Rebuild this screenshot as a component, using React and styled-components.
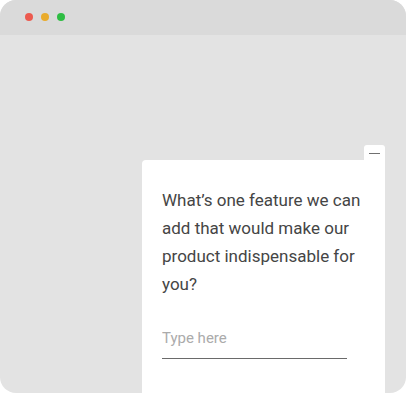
import React from "react";
import styled, { createGlobalStyle } from "styled-components";

const Global = createGlobalStyle`
  html, body { margin: 0; padding: 0; background: #ffffff; }
  body { font-family: Roboto, "Liberation Sans", sans-serif; }
`;

const Window = styled.div`
  width: 406px;
  height: 393px;
  border-radius: 16px;
  overflow: hidden;
  background: #e3e3e3;
  display: flex;
  flex-direction: column;
`;

const TitleBar = styled.div`
  height: 35px;
  flex: none;
  background: #dadada;
  display: flex;
  align-items: center;
  gap: 8px;
  padding-left: 25px;
  padding-bottom: 1px;
  box-sizing: border-box;
`;

const Dot = styled.span`
  width: 8px;
  height: 8px;
  border-radius: 50%;
  background: ${(p) => p.$color};
`;

const Body = styled.div`
  flex: 1;
  min-height: 0;
  display: flex;
  justify-content: flex-end;
  align-items: flex-start;
  padding: 110px 21px 0 0;
`;

const Widget = styled.div`
  display: flex;
  flex-direction: column;
  align-items: flex-end;
  width: 243px;
`;

const MinTab = styled.button`
  width: 21px;
  height: 15px;
  border: none;
  padding: 0;
  background: #ffffff;
  border-radius: 3px 3px 0 0;
  display: flex;
  align-items: center;
  justify-content: center;
  padding-top: 1px;
  cursor: pointer;
`;

const MinLine = styled.span`
  width: 11px;
  height: 1px;
  background: #707070;
`;

const Card = styled.div`
  width: 100%;
  height: 240px;
  background: #ffffff;
  border-radius: 4px 0 0 0;
  box-sizing: border-box;
  padding: 26px 20px 0 20px;
`;

const Question = styled.p`
  margin: 0;
  font-size: 17px;
  line-height: 28px;
  color: #454545;
  font-weight: 400;
`;

const Input = styled.input`
  display: block;
  margin-top: 31px;
  width: 185px;
  border: none;
  border-bottom: 1px solid #6a6a6a;
  outline: none;
  padding: 0 0 11px 0;
  font-family: Roboto, "Liberation Sans", sans-serif;
  font-size: 15px;
  line-height: 18px;
  color: #444;
  background: transparent;
  &::placeholder { color: #ababab; }
`;

export default function App() {
  return (
    <>
      <Global />
      <Window>
        <TitleBar>
          <Dot $color="#ec5a4f" />
          <Dot $color="#e9ab2c" />
          <Dot $color="#2ebd43" />
        </TitleBar>
        <Body>
          <Widget>
            <MinTab aria-label="Minimize">
              <MinLine />
            </MinTab>
            <Card>
              <Question>
                What’s one feature we can add that would make our product
                indispensable for you?
              </Question>
              <Input placeholder="Type here" />
            </Card>
          </Widget>
        </Body>
      </Window>
    </>
  );
}
